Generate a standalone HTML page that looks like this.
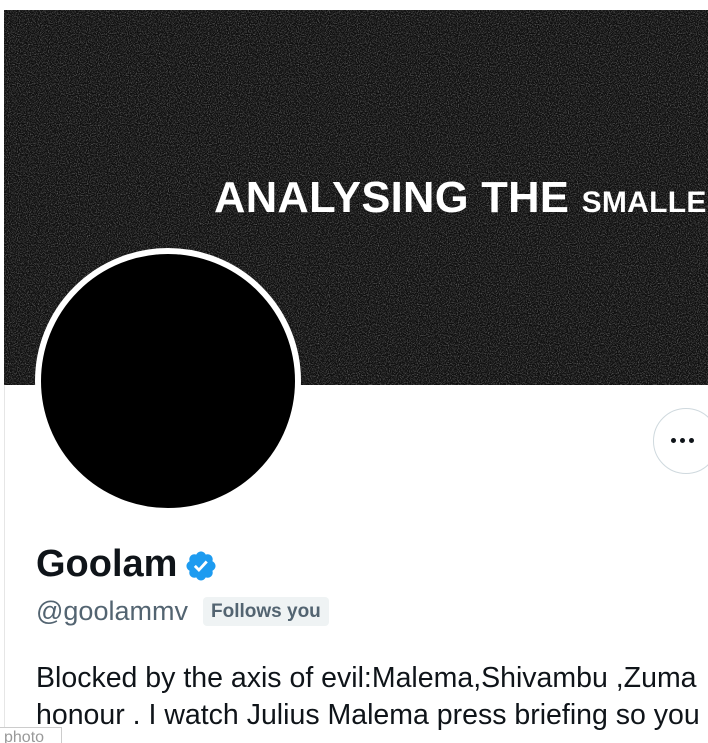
<!DOCTYPE html>
<html><head><meta charset="utf-8"><style>
html,body{margin:0;padding:0;width:708px;height:743px;overflow:hidden;background:#fff;font-family:"Liberation Sans",sans-serif;position:relative}
.lb{position:absolute;left:4px;top:385px;width:1px;height:358px;background:#e6e6e6}
.banner{position:absolute;left:4px;top:10px;width:704px;height:375px;background:#111;overflow:hidden}
.bt{position:absolute;left:210px;top:164px;color:#fff;font-weight:bold;font-size:43.5px;white-space:nowrap;letter-spacing:0.3px}
.bt span{font-size:30px}
.av{position:absolute;left:35px;top:248px;width:254px;height:254px;border-radius:50%;background:#000;border:6px solid #fff}
.more{position:absolute;left:653px;top:408px;width:66px;height:66px;border-radius:50%;border:1px solid #cfd9de;box-sizing:border-box}
.dots{position:absolute;left:671px;top:438px}
.dots i{position:absolute;width:5px;height:5px;border-radius:50%;background:#0f1419;top:0}
.name{position:absolute;left:36px;top:543px;font-size:38px;font-weight:bold;color:#0f1419}
.badge{position:absolute;left:184px;top:549px}
.handle{position:absolute;left:36px;top:596px;font-size:27px;color:#536471}
.fy{position:absolute;left:203px;top:597px;padding:0 8px;height:29px;line-height:29px;background:#eff3f4;border-radius:4px;font-size:19px;font-weight:bold;color:#536471}
.bio{position:absolute;left:36px;top:660px;font-size:28.5px;color:#0f1419;line-height:37px;white-space:nowrap}
.photo{position:absolute;left:-1px;top:727px;width:63px;height:20px;border:1px solid #ccc;background:#fff;color:#999;font-size:16px;line-height:20px;padding-left:4px;box-sizing:border-box}
</style></head><body>
<div class="lb"></div>
<div class="banner">
<svg width="704" height="375" style="position:absolute;left:0;top:0"><filter id="n"><feTurbulence type="fractalNoise" baseFrequency="0.9" numOctaves="2" seed="3"/><feColorMatrix type="matrix" values="0 0 0 0 0.35  0 0 0 0 0.35  0 0 0 0 0.35  0 0 0 1.4 -0.6"/></filter><rect width="704" height="375" fill="#0e0e0e"/><rect width="704" height="375" filter="url(#n)"/></svg>
<div class="bt">ANALYSING THE <span>SMALLEST</span></div>
</div>
<div class="av"></div>
<div class="more"></div>
<div class="dots"><i style="left:0"></i><i style="left:9px"></i><i style="left:18px"></i></div>
<div class="name">Goolam</div>
<svg class="badge" width="34" height="34" viewBox="0 0 24 24"><path fill="#1d9bf0" d="M22.25 12c0-1.43-.88-2.67-2.19-3.34.46-1.39.2-2.9-.81-3.91s-2.52-1.27-3.91-.81c-.66-1.31-1.91-2.19-3.34-2.19s-2.67.88-3.33 2.19c-1.4-.46-2.910-.2-3.92.81s-1.26 2.52-.8 3.91C2.63 9.33 1.75 10.57 1.75 12s.88 2.67 2.2 3.34c-.46 1.39-.21 2.9.8 3.91s2.52 1.26 3.91.81c.67 1.31 1.91 2.19 3.34 2.19s2.68-.88 3.34-2.19c1.39.45 2.9.2 3.91-.81s1.27-2.52.81-3.91c1.31-.67 2.19-1.91 2.19-3.34z"/><path fill="#fff" d="M10.54 16.2l-3.6-3.6 1.42-1.42 2.18 2.19 4.77-5.21 1.48 1.36z"/></svg>
<div class="handle">@goolammv</div>
<div class="fy">Follows you</div>
<div class="bio">Blocked by the axis of evil:Malema,Shivambu ,Zuma<br>honour . I watch Julius Malema press briefing so you</div>
<div class="photo">photo</div>
</body></html>
